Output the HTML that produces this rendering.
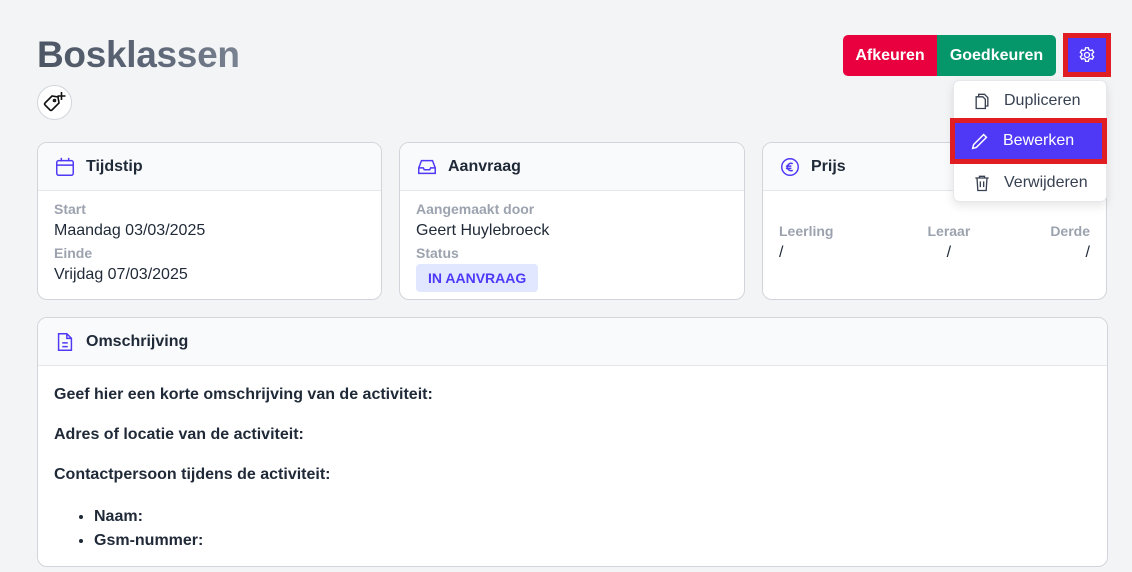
<!DOCTYPE html>
<html><head><meta charset="utf-8"><style>
*{box-sizing:border-box;margin:0;padding:0}
body{width:1132px;height:572px;background:#f3f4f6;font-family:"Liberation Sans",sans-serif;color:#1f2937;position:relative;overflow:hidden}
.abs{position:absolute}
svg{flex-shrink:0}
h1{position:absolute;left:37px;top:34px;font-size:37px;font-weight:700;background:linear-gradient(90deg,#4b5563,#5f6878 60%,#7a8391);-webkit-background-clip:text;color:transparent;letter-spacing:-0.3px}
.tag{left:37px;top:85px;width:35px;height:35px;border-radius:50%;background:#fff;border:1px solid #d1d5db}
.card{position:absolute;background:#fff;border:1px solid #d1d5db;border-radius:10px;overflow:hidden}
.ch{height:48px;background:#f9fafb;border-bottom:1px solid #e5e7eb;display:flex;align-items:center;padding-left:16px;font-weight:700;font-size:16px;color:#1f2937}
.ch svg{margin-right:10px}
.lbl{font-size:14px;color:#9ca3af;font-weight:700;line-height:22px}
.val{font-size:16px;color:#1f2937;line-height:22px}
.btn{position:absolute;color:#fff;font-weight:700;font-size:16px;display:flex;align-items:center;justify-content:center}
.menu{left:953px;top:80px;width:154px;height:122px;background:#fff;border:1px solid #e5e7eb;border-radius:6px;box-shadow:0 4px 10px rgba(0,0,0,.1);z-index:5}
.mi{position:absolute;left:0;width:154px;height:36px;display:flex;align-items:center;padding-left:18px;font-size:16px;color:#374151}
.mi svg{margin-right:12px}
.desc p{font-weight:700;font-size:16px;margin-bottom:21px;line-height:19px}
</style></head><body>
<h1>Bosklassen</h1>
<div class="abs tag"><svg width="33" height="33" viewBox="0 0 33 33" fill="none" stroke="#111" stroke-width="1.6"><path d="M7 17l7-7 6 1 1 6-7 7a1.5 1.5 0 0 1-2 0l-5-5a1.5 1.5 0 0 1 0-2z"/><circle cx="16.5" cy="14.5" r="1"/><path d="M23.5 6v8M19.5 10h8"/></svg></div>

<div class="btn" style="left:843px;top:35px;width:94px;height:41px;background:#e8003f;border-radius:5px 0 0 5px">Afkeuren</div>
<div class="btn" style="left:937px;top:35px;width:119px;height:41px;background:#059669;border-radius:0 5px 5px 0">Goedkeuren</div>
<div class="abs" style="left:1063px;top:33px;width:48px;height:44px;background:#e11d24"></div>
<div class="btn" style="left:1068px;top:38px;width:38px;height:34px;background:#4f39f6"><svg width="20" height="20" viewBox="0 0 24 24" fill="none" stroke="#fff" stroke-width="1.6"><path d="M10.3 3.3h3.4l.5 2.4 1.8 1 2.3-.8 1.7 2.9-1.8 1.6v2.1l1.8 1.6-1.7 2.9-2.3-.8-1.8 1-.5 2.4h-3.4l-.5-2.4-1.8-1-2.3.8-1.7-2.9 1.8-1.6v-2.1L4 8.8l1.7-2.9 2.3.8 1.8-1z"/><circle cx="12" cy="12" r="3"/></svg></div>

<div class="abs menu">
<div class="mi" style="top:2px"><svg width="20" height="20" viewBox="0 0 24 24" fill="none" stroke="#374151" stroke-width="1.6"><path d="M8 7V4h7l4 4v10h-3"/><path d="M5 7h8l3 3v11H5z"/></svg>Dupliceren</div>
<div class="mi" style="top:84px"><svg width="20" height="20" viewBox="0 0 24 24" fill="none" stroke="#374151" stroke-width="1.6"><path d="M4 6h16M9 6V4h6v2M6 6l1 15h10l1-15M10 10v7M14 10v7"/></svg>Verwijderen</div>
</div>
<div class="abs" style="left:950px;top:118px;width:157px;height:46px;background:#e11d24;z-index:6"></div>
<div class="abs mi" style="left:955px;top:123px;width:147px;background:#4f39f6;color:#fff;padding-left:14px;height:36px;z-index:7"><svg width="22" height="22" viewBox="0 0 24 24" fill="none" stroke="#fff" stroke-width="1.6"><path d="M4 20l1-4L16 5l3 3L8 19z"/></svg>Bewerken</div>

<div class="card" style="left:37px;top:142px;width:345px;height:158px">
<div class="ch"><svg width="22" height="22" viewBox="0 0 24 24" fill="none" stroke="#4f39f6" stroke-width="1.6"><rect x="3" y="5" width="18" height="16" rx="2"/><path d="M3 10h18M8 2v4M16 2v4"/></svg>Tijdstip</div>
<div style="padding:7px 16px 0">
<div class="lbl">Start</div><div class="val">Maandag 03/03/2025</div>
<div class="lbl">Einde</div><div class="val">Vrijdag 07/03/2025</div></div></div>

<div class="card" style="left:399px;top:142px;width:346px;height:158px">
<div class="ch"><svg width="22" height="22" viewBox="0 0 24 24" fill="none" stroke="#4f39f6" stroke-width="1.6"><path d="M3 13l3-8h12l3 8v6H3z"/><path d="M3 13h5l1 2h6l1-2h5"/></svg>Aanvraag</div>
<div style="padding:7px 16px 0">
<div class="lbl">Aangemaakt door</div><div class="val">Geert Huylebroeck</div>
<div class="lbl">Status</div>
<div style="display:inline-block;background:#e0e7ff;color:#4f39f6;font-weight:700;font-size:14px;padding:6px 12px;border-radius:4px">IN AANVRAAG</div></div></div>

<div class="card" style="left:762px;top:142px;width:345px;height:158px">
<div class="ch"><svg width="22" height="22" viewBox="0 0 24 24" fill="none" stroke="#4f39f6" stroke-width="1.6"><circle cx="12" cy="12" r="9"/><path d="M15 8.5a4 4 0 1 0 0 7M7.5 11h6M7.5 13.5h6"/></svg>Prijs</div>
<div style="padding:29px 16px 0;display:flex;justify-content:space-between">
<div><div class="lbl">Leerling</div><div class="val">/</div></div>
<div style="text-align:center;margin-right:-14px"><div class="lbl">Leraar</div><div class="val">/</div></div>
<div style="text-align:right"><div class="lbl">Derde</div><div class="val">/</div></div></div></div>

<div class="card desc" style="left:37px;top:317px;width:1071px;height:250px">
<div class="ch"><svg width="22" height="22" viewBox="0 0 24 24" fill="none" stroke="#4f39f6" stroke-width="1.6"><path d="M5 3h9l5 5v13H5z"/><path d="M14 3v5h5M9 13h6M9 17h6"/></svg>Omschrijving</div>
<div style="padding:19px 16px 0">
<p>Geef hier een korte omschrijving van de activiteit:</p>
<p>Adres of locatie van de activiteit:</p>
<p style="margin-bottom:21px">Contactpersoon tijdens de activiteit:</p>
<ul style="padding-left:40px;font-weight:700;font-size:16px;line-height:24px"><li>Naam:</li><li>Gsm-nummer:</li></ul></div></div>
</body></html>
